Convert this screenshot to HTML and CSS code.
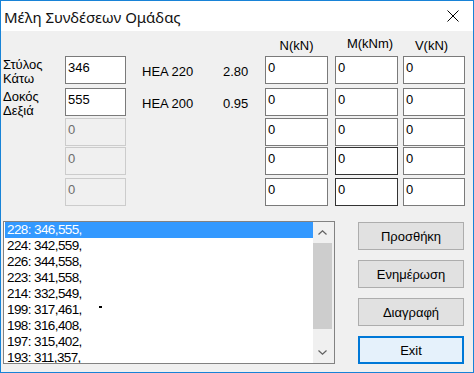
FILE: index.html
```html
<!DOCTYPE html>
<html lang="el">
<head>
  <meta charset="UTF-8" />
  <title>Μέλη Συνδέσεων Ομάδας</title>
  <link rel="stylesheet" href="styles.css">
</head>
<body>
  <div class="window">
    <div class="titlebar">
      <span class="title">Μέλη Συνδέσεων Ομάδας</span>
      <svg class="close" width="12" height="12" viewBox="0 0 12 12">
        <path d="M0.5 0.5 L11.5 11.5 M11.5 0.5 L0.5 11.5" stroke="#000" stroke-width="1" fill="none" />
      </svg>
    </div>

    <div class="content">
      <!-- πίνακας μελών -->
      <div class="head-row">
        <span class="head n">N(kN)</span>
        <span class="head m">M(kNm)</span>
        <span class="head v">V(kN)</span>
      </div>

      <div class="row gap4">
        <div class="label">Στύλος<br>Κάτω</div>
        <div class="box">346</div>
        <div class="section">HEA 220</div>
        <div class="len">2.80</div>
        <div class="box force n">0</div>
        <div class="box force m">0</div>
        <div class="box force v">0</div>
      </div>

      <div class="row gap2">
        <div class="label">Δοκός<br>Δεξιά</div>
        <div class="box">555</div>
        <div class="section">HEA 200</div>
        <div class="len">0.95</div>
        <div class="box force n">0</div>
        <div class="box force m">0</div>
        <div class="box force v">0</div>
      </div>

      <div class="row gap1">
        <div class="label"></div>
        <div class="box off">0</div>
        <div class="section"></div>
        <div class="len"></div>
        <div class="box force n">0</div>
        <div class="box force m">0</div>
        <div class="box force v">0</div>
      </div>

      <div class="row gap3">
        <div class="label"></div>
        <div class="box off">0</div>
        <div class="section"></div>
        <div class="len"></div>
        <div class="box force n">0</div>
        <div class="box force m dark">0</div>
        <div class="box force v">0</div>
      </div>

      <div class="row">
        <div class="label"></div>
        <div class="box off">0</div>
        <div class="section"></div>
        <div class="len"></div>
        <div class="box force n">0</div>
        <div class="box force m dark">0</div>
        <div class="box force v">0</div>
      </div>

      <!-- λίστα ομάδων και κουμπιά -->
      <div class="bottom">
        <div class="list">
          <div class="items">
            <div class="item sel">228: 346,555,</div>
            <div class="item">224: 342,559,</div>
            <div class="item">226: 344,558,</div>
            <div class="item">223: 341,558,</div>
            <div class="item">214: 332,549,</div>
            <div class="item">199: 317,461,<span class="dash"></span></div>
            <div class="item">198: 316,408,</div>
            <div class="item">197: 315,402,</div>
            <div class="item">193: 311,357,</div>
          </div>
          <div class="scroll">
            <div class="arrow">
              <svg width="9" height="5" viewBox="0 0 9 5"><path d="M0.5 4.5 L4.5 0.8 L8.5 4.5" stroke="#606060" stroke-width="1.2" fill="none" /></svg>
            </div>
            <div class="thumb"></div>
            <div class="track"></div>
            <div class="arrow">
              <svg width="9" height="5" viewBox="0 0 9 5"><path d="M0.5 0.5 L4.5 4.2 L8.5 0.5" stroke="#606060" stroke-width="1.2" fill="none" /></svg>
            </div>
          </div>
        </div>

        <div class="buttons">
          <button class="btn">Προσθήκη</button>
          <button class="btn">Ενημέρωση</button>
          <button class="btn">Διαγραφή</button>
          <button class="btn default">Exit</button>
        </div>
      </div>
    </div>
  </div>
</body>
</html>
```

FILE: styles.css
```css
* {
  box-sizing: border-box;
}

body {
  margin: 0;
  background: #fff;
  font-family: "Liberation Sans", Arial, sans-serif;
  font-size: 13px;
  color: #000;
}

.window {
  width: 474px;
  height: 373px;
  border: 1px solid #1883d7;
  background: #f0f0f0;
  overflow: hidden;
}

.titlebar {
  height: 30px;
  background: #fff;
  display: flex;
  justify-content: space-between;
  align-items: flex-start;
}

.title {
  font-family: "Noto Sans", sans-serif;
  font-size: 15px;
  line-height: 20px;
  padding: 6px 0 0 3px;
  color: #111;
}

.close {
  margin: 9px 14px 0 0;
}

.content {
  padding-left: 2px;
}

.head-row {
  display: flex;
  align-items: flex-start;
  height: 25px;
  padding: 7px 0 0 262px;
  line-height: 16px;
}

.head {
  text-align: center;
}

.head.n {
  width: 63px;
}

.head.m {
  width: 63px;
  margin-left: 7px;
  margin-top: -2px;
  padding-left: 7px;
}

.head.v {
  width: 62px;
  margin-left: 5px;
  padding-right: 5px;
}

.row {
  display: flex;
  height: 28px;
}

.gap4 { margin-bottom: 4px; }
.gap3 { margin-bottom: 3px; }
.gap2 { margin-bottom: 2px; }
.gap1 { margin-bottom: 1px; }

.label {
  width: 62px;
  margin-top: 2px;
  line-height: 14px;
  white-space: nowrap;
}

.box {
  width: 61px;
  height: 28px;
  border: 1px solid #7a7a7a;
  background: #fff;
  padding: 3px 2px 0;
  line-height: 16px;
}

.box.off {
  border-color: #cccccc;
  background: #f0f0f0;
  color: #6d6d6d;
}

.box.dark {
  border-color: #333;
}

.section {
  width: 81px;
  margin-left: 16px;
  padding-top: 8px;
  line-height: 16px;
}

.len {
  width: 42px;
  padding-top: 8px;
  line-height: 16px;
}

.force.n {
  width: 63px;
}

.force.m {
  width: 63px;
  margin-left: 7px;
}

.force.v {
  width: 62px;
  margin-left: 5px;
}

.bottom {
  display: flex;
  margin-top: 15px;
}

.list {
  width: 332px;
  height: 143px;
  border: 1px solid #828282;
  background: #fff;
  display: flex;
}

.items {
  flex: 1;
  overflow: hidden;
  padding-left: 1px;
}

.item {
  height: 16px;
  line-height: 16px;
  padding-left: 2px;
  font-size: 13.5px;
  letter-spacing: -0.6px;
  white-space: nowrap;
}

.item.sel {
  background: #3399ff;
  color: #fff;
}

.dash {
  display: inline-block;
  width: 3px;
  height: 2px;
  background: #000;
  vertical-align: top;
  margin: 4px 0 0 17px;
}

.scroll {
  width: 21px;
  background: #f0f0f0;
  display: flex;
  flex-direction: column;
}

.arrow {
  height: 21px;
  display: flex;
  align-items: center;
  justify-content: center;
  padding-right: 2px;
}

.thumb {
  height: 86px;
  background: #cdcdcd;
  margin-right: 2px;
}

.track {
  flex: 1;
}

.buttons {
  display: flex;
  flex-direction: column;
  gap: 10px;
  margin: 1px 0 0 23px;
}

.btn {
  width: 106px;
  height: 28px;
  border: 1px solid #adadad;
  background: #e1e1e1;
  font-family: "Liberation Sans", Arial, sans-serif;
  font-size: 13px;
  color: #000;
  padding: 0;
}

.btn.default {
  border: 2px solid #0078d7;
  background: #e5f1fb;
}
```
